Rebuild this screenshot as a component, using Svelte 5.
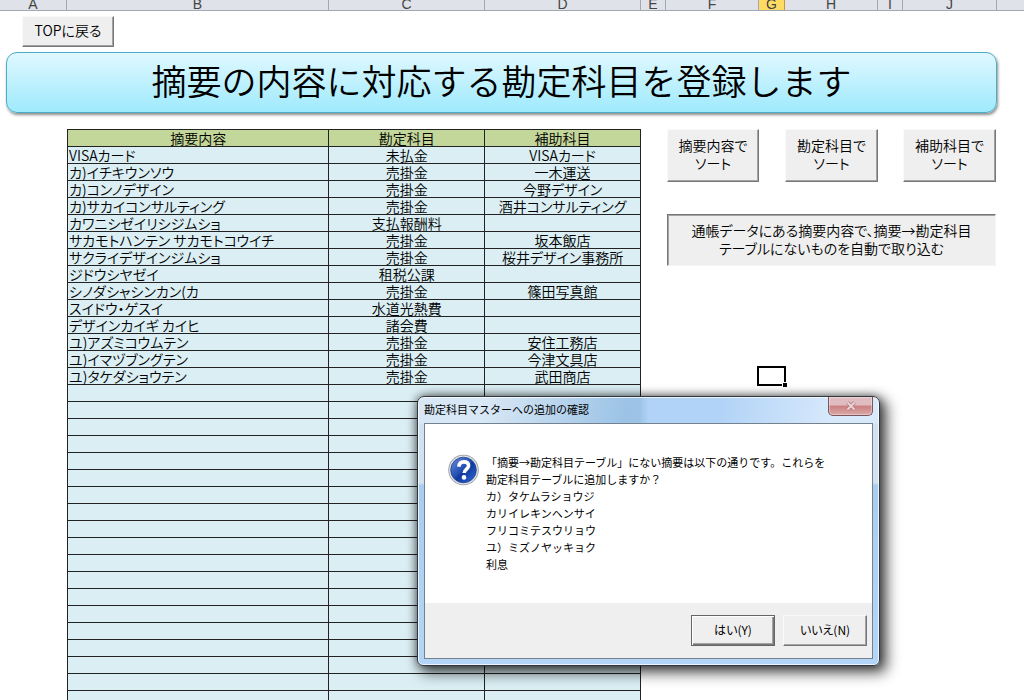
<script lang="ts">
	const columns = ['A', 'B', 'C', 'D', 'E', 'F', 'G', 'H', 'I', 'J', ''];
	const activeColumn = 'G';

	const entries = [
		['VISAカード', '未払金', 'VISAカード'],
		['カ)イチキウンソウ', '売掛金', '一木運送'],
		['カ)コンノデザイン', '売掛金', '今野デザイン'],
		['カ)サカイコンサルティング', '売掛金', '酒井コンサルティング'],
		['カワニシゼイリシジムショ', '支払報酬料', ''],
		['サカモトハンテン サカモトコウイチ', '売掛金', '坂本飯店'],
		['サクライデザインジムショ', '売掛金', '桜井デザイン事務所'],
		['ジドウシヤゼイ', '租税公課', ''],
		['シノダシャシンカン(カ', '売掛金', '篠田写真館'],
		['スイドウ・ゲスイ', '水道光熱費', ''],
		['デザインカイギ カイヒ', '諸会費', ''],
		['ユ)アズミコウムテン', '売掛金', '安住工務店'],
		['ユ)イマヅブングテン', '売掛金', '今津文具店'],
		['ユ)タケダショウテン', '売掛金', '武田商店']
	];
	const BLANK_ROWS = 20;
	const rows = [...entries, ...Array.from({ length: BLANK_ROWS }, () => ['', '', ''])];

	const missing = ['カ）タケムラショウジ', 'カリイレキンヘンサイ', 'フリコミテスウリョウ', 'ユ）ミズノヤッキョク', '利息'];

	const sortKeys = ['摘要内容', '勘定科目', '補助科目'];

	let open = $state(true);
	const close = () => (open = false);
</script>

<div class="workbook">
	<div class="grid-cols col-heads">
		{#each columns as name}
			<span class="col-head" class:active={name === activeColumn}>{name}</span>
		{/each}
	</div>

	<main>
		<button class="raised top-btn">TOPに戻る</button>
		<h1>摘要の内容に対応する勘定科目を登録します</h1>

		<div class="grid-cols sheet">
			<table>
				<colgroup>
					<col class="c-desc" />
					<col class="c-acct" />
					<col class="c-sub" />
				</colgroup>
				<thead>
					<tr><th>摘要内容</th><th>勘定科目</th><th>補助科目</th></tr>
				</thead>
				<tbody>
					{#each rows as row}
						<tr>
							{#each row as cell}<td>{cell}</td>{/each}
						</tr>
					{/each}
				</tbody>
			</table>

			<div class="side">
				{#each sortKeys as key}
					<button class="raised sort-btn">{key}で<br />ソート</button>
				{/each}
				<button class="import-btn">
					通帳データにある摘要内容で、摘要→勘定科目<br />テーブルにないものを自動で取り込む
				</button>
				<div class="active-cell"></div>
			</div>
		</div>
	</main>

	{#if open}
		<div class="dialog" role="dialog" aria-labelledby="dialog-title">
			<div class="title-bar">
				<span id="dialog-title">勘定科目マスターへの追加の確認</span>
				<button class="close-btn" aria-label="閉じる" onclick={close}>
					<svg width="12" height="10" viewBox="0 0 12 10">
						<path d="M2.5 1.5 L9.5 8.5 M9.5 1.5 L2.5 8.5" stroke="#a9747a" stroke-width="3.4" />
						<path d="M2.5 1.5 L9.5 8.5 M9.5 1.5 L2.5 8.5" stroke="#ecd3d6" stroke-width="2" />
					</svg>
				</button>
			</div>
			<div class="client">
				<div class="message">
					<svg class="icon" width="32" height="32" viewBox="0 0 32 32">
						<defs>
							<linearGradient id="ball" x1="0" y1="0" x2="1" y2="1">
								<stop offset="0" stop-color="#6f8fd8" />
								<stop offset="0.45" stop-color="#2450b4" />
								<stop offset="0.55" stop-color="#123a9c" />
								<stop offset="1" stop-color="#2f6bdc" />
							</linearGradient>
						</defs>
						<circle cx="15.5" cy="16" r="15.2" fill="#8f959d" />
						<circle cx="15.5" cy="16" r="14.4" fill="#dfe2e6" />
						<circle cx="15.5" cy="16" r="12.8" fill="url(#ball)" stroke="#1d3f90" stroke-width="0.8" />
						<path
							d="M11 12.8 C11 9.2 12.9 7.9 15.8 7.9 C18.8 7.9 20.6 9.5 20.6 11.8 C20.6 15 16.2 15.2 16.2 19"
							fill="none"
							stroke="#fff"
							stroke-width="3.6"
						/>
						<circle cx="16" cy="23.4" r="2.3" fill="#fff" />
					</svg>
					<p>
						「摘要→勘定科目テーブル」にない摘要は以下の通りです。これらを<br />勘定科目テーブルに追加しますか？
						{#each missing as item}<br />{item}{/each}
					</p>
				</div>
				<div class="actions">
					<button class="raised default" onclick={close}>はい(Y)</button>
					<button class="raised" onclick={close}>いいえ(N)</button>
				</div>
			</div>
		</div>
	{/if}
</div>

<style>
	:global(body) {
		background: #fff;
	}
	.workbook {
		position: relative;
		height: 100vh;
		overflow: hidden;
		font-family: 'Noto Sans CJK JP', 'Liberation Sans', sans-serif;
		font-feature-settings: 'palt';
		font-size: 14px;
		font-weight: 350;
		color: #000;
	}
	button {
		font: inherit;
		font-feature-settings: inherit;
		color: inherit;
		padding: 0 0 3px;
		white-space: nowrap;
	}
	.grid-cols {
		display: grid;
		grid-template-columns: 67fr 262fr 156fr 156fr 25fr 93fr 26fr 93fr 25fr 94fr 27fr;
	}
	.col-heads {
		height: 11px;
		overflow: hidden;
		background: #dfe2e8;
		border-bottom: 1px solid #a3a9b2;
		box-sizing: border-box;
	}
	.col-head {
		display: flex;
		align-items: flex-end;
		justify-content: center;
		height: 10px;
		box-sizing: border-box;
		border-right: 1px solid #a3a9b2;
		font-family: 'Liberation Sans', Arial, sans-serif;
		line-height: 12px;
		color: #444;
	}
	.col-head:last-child {
		border-right: 0;
	}
	.col-head.active {
		background: #ffdc61;
		border-color: #c99a2a;
	}
	.raised {
		background: #efefef;
		border: 1px solid;
		border-color: #fafafa #777 #777 #fafafa;
		box-shadow: inset -1px -1px 0 #a3a3a3;
	}
	.top-btn {
		display: block;
		width: 92px;
		height: 31px;
		margin: 5px 0 5px 22px;
	}
	h1 {
		margin: 0 27px 0 6px;
		padding-bottom: 5px;
		border: 1px solid #4bacc6;
		border-radius: 11px;
		background: linear-gradient(#e0f8ff, #9eeafd);
		box-shadow: 1px 2px 3px rgba(0, 0, 0, 0.45);
		font-size: 35px;
		font-weight: 350;
		font-feature-settings: normal;
		line-height: 54px;
		text-align: center;
	}
	.sheet {
		margin-top: 16px;
		align-items: start;
	}
	table {
		grid-column: 2 / 5;
		width: 100%;
		table-layout: fixed;
		border-collapse: collapse;
		background: #daeef3;
	}
	.c-desc {
		width: 45.6%;
	}
	.c-acct,
	.c-sub {
		width: 27.2%;
	}
	th,
	td {
		height: 16px;
		padding: 0 1px;
		border: 1px solid #222;
		line-height: 16px;
		font-weight: inherit;
		text-align: center;
		white-space: nowrap;
	}
	th {
		background: #c4d79b;
	}
	td:first-child {
		text-align: left;
	}
	.side {
		grid-column: 6 / 11;
		display: grid;
		grid-template-columns: subgrid;
		line-height: 18px;
		margin: 0 1px;
	}
	.sort-btn {
		height: 53px;
	}
	.sort-btn:nth-child(2) {
		grid-column: 3;
	}
	.sort-btn:nth-child(3) {
		grid-column: 5;
	}
	.import-btn {
		grid-column: 1 / -1;
		height: 52px;
		margin-top: 32px;
		background: #efefef;
		border: 1px solid;
		border-color: #777 #f4f4f4 #f4f4f4 #777;
		box-shadow: inset 1px 1px 0 #a3a3a3;
	}
	.active-cell {
		position: relative;
		grid-column: 2;
		height: 16px;
		margin: 100px -1px 0 -2px;
		border: 2px solid #000;
	}
	.active-cell::after {
		content: '';
		position: absolute;
		right: -3px;
		bottom: -3px;
		width: 4px;
		height: 4px;
		background: #000;
		border: 1px solid #fff;
		border-width: 1px 0 0 1px;
	}
	.dialog {
		position: absolute;
		left: 417px;
		top: 396px;
		width: 463px;
		box-sizing: border-box;
		padding: 0 6px 6px;
		border: 1px solid #30373f;
		border-radius: 7px 7px 6px 6px;
		background:
			linear-gradient(100deg, rgba(255, 255, 255, 0.6) 15%, transparent 45%, transparent 65%, rgba(255, 255, 255, 0.5) 90%) top / 100% 27px no-repeat,
			linear-gradient(90deg, #9cc3e6 48%, #b1d3f7 50%) top / 100% 27px no-repeat,
			linear-gradient(#d2e2f0 32%, #a9cdf0 33%, #b3d5f8);
		box-shadow:
			inset 0 0 0 1px rgba(255, 255, 255, 0.75),
			0 0 8px rgba(0, 0, 0, 0.5),
			5px 5px 14px 2px rgba(0, 0, 0, 0.65);
		font-size: 11px;
		font-weight: 400;
		font-feature-settings: normal;
	}
	.title-bar {
		display: flex;
		justify-content: space-between;
		align-items: flex-start;
		height: 26px;
		line-height: 25px;
	}
	.close-btn {
		display: flex;
		align-items: center;
		justify-content: center;
		width: 45px;
		height: 19px;
		padding: 0;
		border: 1px solid #7b545d;
		border-top: 0;
		border-radius: 0 0 5px 5px;
		background: linear-gradient(#e0bcc0 45%, #cb7f7f 50%, #d9a9a8);
		box-shadow: inset 0 0 0 1px rgba(255, 255, 255, 0.35);
	}
	.client {
		border: 1px solid #74828f;
		background: #fff;
	}
	.message {
		display: flex;
		gap: 6px;
		min-height: 149px;
		padding: 30px 23px 0;
		line-height: 17px;
	}
	.icon {
		flex: none;
	}
	p {
		margin: 0;
		white-space: nowrap;
	}
	.actions {
		display: flex;
		justify-content: flex-end;
		gap: 8px;
		padding: 12px 5px;
		background: #efefef;
	}
	.actions button {
		width: 84px;
		height: 31px;
		font-size: 12px;
		font-feature-settings: 'palt';
	}
	.actions .default {
		border-color: #666;
		box-shadow:
			inset 1px 1px 0 #fff,
			inset -1px -1px 0 #777,
			inset -2px -2px 0 #a3a3a3;
	}
</style>
